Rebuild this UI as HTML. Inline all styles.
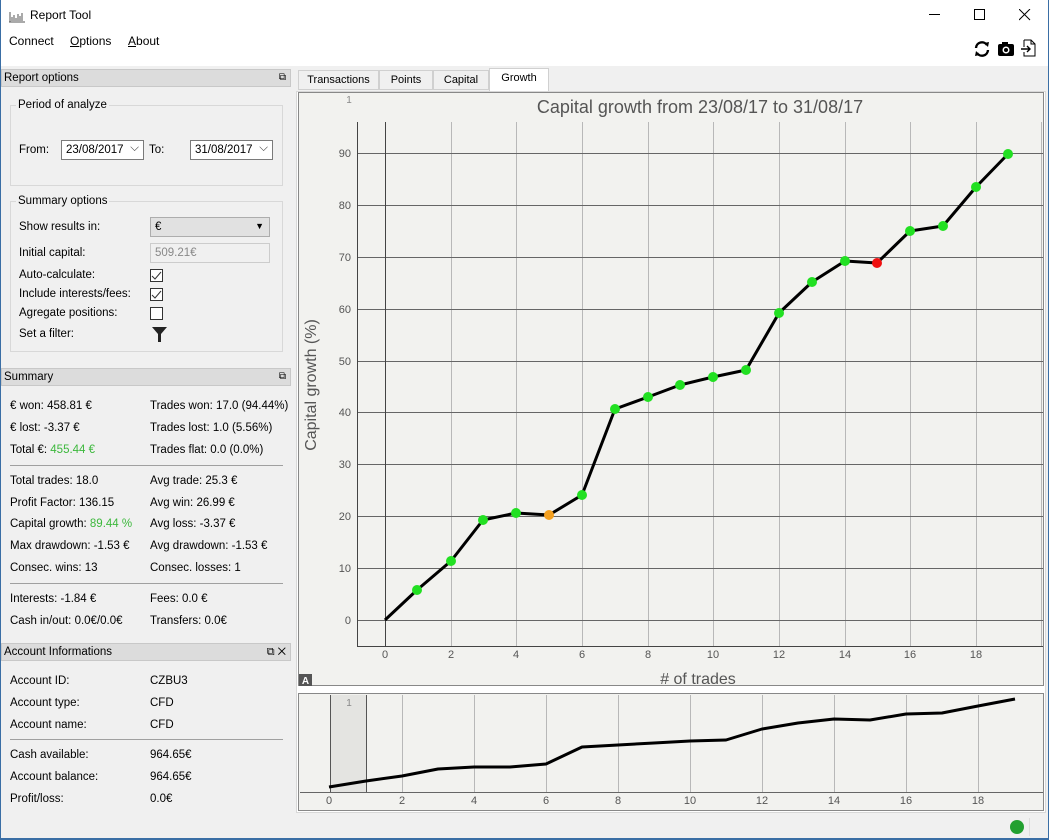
<!DOCTYPE html>
<html><head><meta charset="utf-8"><style>
*{margin:0;padding:0;box-sizing:border-box}
body{width:1049px;height:840px;background:#f0f0f0;font-family:"Liberation Sans",sans-serif;font-size:11.5px;color:#000;position:relative;overflow:hidden}
.a{position:absolute;white-space:nowrap}
.hdr{position:absolute;left:1px;width:290px;height:18px;background:#dcdcdc;border:1px solid #c8c8c8;padding:2px 2px;font-size:11.5px}
.grp{position:absolute;border:1px solid #d8d8d8}
.cb{position:absolute;width:13px;height:13px;border:1px solid #333;background:#fff}
.hr{position:absolute;left:10px;width:273px;height:1px;background:#a0a0a0}
.g{color:#3cb83c}
</style></head><body>
<div class="a" style="left:0;top:0;width:1049px;height:66px;background:#fff"></div>
<div class="a" style="left:0;top:0;width:1px;height:840px;background:#3a6ea5"></div>
<div class="a" style="right:0;top:0;width:1px;height:840px;background:#3a6ea5"></div>
<svg class="a" style="left:8px;top:8px" width="18" height="16"><path d="M1 14H17M2 14V4M4 13V9M6 13V7M8 13V10M10 13V6M12 13V8M14 13V5" stroke="#555" stroke-width="1" fill="none"/></svg>
<div class="a" style="left:30px;top:8px;font-size:12px">Report Tool</div>
<div class="a" style="left:929px;top:14px;width:11px;height:1px;background:#000"></div>
<div class="a" style="left:974px;top:9px;width:11px;height:11px;border:1px solid #000"></div>
<svg class="a" style="left:1019px;top:9px" width="12" height="12"><path d="M0 0L11 11M11 0L0 11" stroke="#000"/></svg>
<div class="a" style="left:9px;top:34px;font-size:12px">Connect</div>
<div class="a" style="left:70px;top:34px;font-size:12px"><u>O</u>ptions</div>
<div class="a" style="left:128px;top:34px;font-size:12px"><u>A</u>bout</div>
<svg class="a" style="left:973px;top:40px" width="18" height="18"><path d="M3 8A6 6 0 0 1 14 5M15 10A6 6 0 0 1 4 13" stroke="#000" stroke-width="2.4" fill="none"/><path d="M11 3L16 2L15 7Z M7 15L2 16L3 11Z" fill="#000"/></svg>
<svg class="a" style="left:997px;top:41px" width="18" height="16"><rect x="1" y="3" width="16" height="12" rx="2" fill="#000"/><rect x="5" y="1" width="6" height="3" fill="#000"/><circle cx="9" cy="9" r="3.5" fill="#fff"/><circle cx="9" cy="9" r="2" fill="#000"/></svg>
<svg class="a" style="left:1021px;top:39px" width="16" height="19"><path d="M3 1H10L14 5V17H3V13M3 8V1M10 1V5H14" stroke="#000" fill="none"/><path d="M0 10H9M6 7L9 10L6 13" stroke="#000" stroke-width="1.4" fill="none"/></svg>

<div class="hdr" style="top:69px">Report options<span style="position:absolute;right:4px;font-size:10px">⧉</span></div>
<div class="grp" style="left:10px;top:105px;width:273px;height:81px"></div>
<div class="a" style="left:16px;top:99px;background:#f0f0f0;padding:0 2px">Period of analyze</div>
<div class="a" style="left:19px;top:144px">From:</div>
<div class="a" style="left:61px;top:140px;width:83px;height:20px;border:1px solid #7a7a7a;background:#fff;padding:3px 4px">23/08/2017 <span style="position:absolute;right:4px;top:1px;color:#444">⌵</span></div>
<div class="a" style="left:149px;top:144px">To:</div>
<div class="a" style="left:190px;top:140px;width:83px;height:20px;border:1px solid #7a7a7a;background:#fff;padding:3px 4px">31/08/2017 <span style="position:absolute;right:4px;top:1px;color:#444">⌵</span></div>
<div class="grp" style="left:10px;top:201px;width:273px;height:151px"></div>
<div class="a" style="left:16px;top:195px;background:#f0f0f0;padding:0 2px">Summary options</div>
<div class="a" style="left:19px;top:221px">Show results in:</div>
<div class="a" style="left:150px;top:217px;width:120px;height:20px;border:1px solid #adadad;background:#e1e1e1;padding:3px 4px">€<span style="position:absolute;right:5px;top:3px;font-size:9px">▼</span></div>
<div class="a" style="left:19px;top:247px">Initial capital:</div>
<div class="a" style="left:150px;top:243px;width:120px;height:20px;border:1px solid #ccc;background:#f0f0f0;padding:3px 4px;color:#888">509.21€</div>
<div class="a" style="left:19px;top:269px">Auto-calculate:</div>
<div class="cb" style="left:150px;top:269px"><svg width="11" height="11" style="position:absolute;left:0;top:0"><path d="M1 6L4 9L10 2" stroke="#333" fill="none"/></svg></div>
<div class="a" style="left:19px;top:288px">Include interests/fees:</div>
<div class="cb" style="left:150px;top:288px"><svg width="11" height="11" style="position:absolute;left:0;top:0"><path d="M1 6L4 9L10 2" stroke="#333" fill="none"/></svg></div>
<div class="a" style="left:19px;top:307px">Agregate positions:</div>
<div class="cb" style="left:150px;top:307px"></div>
<div class="a" style="left:19px;top:328px">Set a filter:</div>
<svg class="a" style="left:152px;top:326px" width="15" height="17"><path d="M0 1H15L9 8V16H6V8Z" fill="#222"/></svg>

<div class="hdr" style="top:368px">Summary<span style="position:absolute;right:4px;font-size:10px">⧉</span></div>
<div class="a" style="left:10px;top:400px">€ won: 458.81 €</div><div class="a" style="left:150px;top:400px">Trades won: 17.0 (94.44%)</div>
<div class="a" style="left:10px;top:422px">€ lost: -3.37 €</div><div class="a" style="left:150px;top:422px">Trades lost: 1.0 (5.56%)</div>
<div class="a" style="left:10px;top:444px">Total €: <span class="g">455.44 €</span></div><div class="a" style="left:150px;top:444px">Trades flat: 0.0 (0.0%)</div>
<div class="hr" style="top:465px"></div>
<div class="a" style="left:10px;top:475px">Total trades: 18.0</div><div class="a" style="left:150px;top:475px">Avg trade: 25.3 €</div>
<div class="a" style="left:10px;top:497px">Profit Factor: 136.15</div><div class="a" style="left:150px;top:497px">Avg win: 26.99 €</div>
<div class="a" style="left:10px;top:518px">Capital growth: <span class="g">89.44 %</span></div><div class="a" style="left:150px;top:518px">Avg loss: -3.37 €</div>
<div class="a" style="left:10px;top:540px">Max drawdown: -1.53 €</div><div class="a" style="left:150px;top:540px">Avg drawdown: -1.53 €</div>
<div class="a" style="left:10px;top:562px">Consec. wins: 13</div><div class="a" style="left:150px;top:562px">Consec. losses: 1</div>
<div class="hr" style="top:583px"></div>
<div class="a" style="left:10px;top:593px">Interests: -1.84 €</div><div class="a" style="left:150px;top:593px">Fees: 0.0 €</div>
<div class="a" style="left:10px;top:615px">Cash in/out: 0.0€/0.0€</div><div class="a" style="left:150px;top:615px">Transfers: 0.0€</div>

<div class="hdr" style="top:643px">Account Informations<span style="position:absolute;right:4px;font-size:11px">⧉ ✕</span></div>
<div class="a" style="left:10px;top:675px">Account ID:</div><div class="a" style="left:150px;top:675px">CZBU3</div>
<div class="a" style="left:10px;top:697px">Account type:</div><div class="a" style="left:150px;top:697px">CFD</div>
<div class="a" style="left:10px;top:719px">Account name:</div><div class="a" style="left:150px;top:719px">CFD</div>
<div class="hr" style="top:739px"></div>
<div class="a" style="left:10px;top:749px">Cash available:</div><div class="a" style="left:150px;top:749px">964.65€</div>
<div class="a" style="left:10px;top:771px">Account balance:</div><div class="a" style="left:150px;top:771px">964.65€</div>
<div class="a" style="left:10px;top:793px">Profit/loss:</div><div class="a" style="left:150px;top:793px">0.0€</div>

<div class="a" style="left:298px;top:70px;width:81px;height:20px;border:1px solid #d0d0d0;background:#f0f0f0;padding:3px 0;text-align:center;font-size:11px">Transactions</div>
<div class="a" style="left:379px;top:70px;width:54px;height:20px;border:1px solid #d0d0d0;background:#f0f0f0;padding:3px 0;text-align:center;font-size:11px">Points</div>
<div class="a" style="left:433px;top:70px;width:56px;height:20px;border:1px solid #d0d0d0;background:#f0f0f0;padding:3px 0;text-align:center;font-size:11px">Capital</div>
<div class="a" style="left:489px;top:68px;width:60px;height:24px;border:1px solid #d0d0d0;border-bottom:none;background:#fff;padding:3px 0;text-align:center;font-size:11px">Growth</div>

<svg class="a" style="left:0;top:0" width="1049" height="840" font-family="Liberation Sans, sans-serif">
<rect x="296.5" y="91.5" width="749" height="721" fill="#fff" stroke="#d8d8d8"/>
<rect x="298.5" y="92.5" width="745" height="593" fill="#f2f2ef" stroke="#888"/>
<rect x="298.5" y="693.5" width="745" height="117" fill="#f2f2ef" stroke="#888"/>
<text x="700" y="113" font-size="18" fill="#555" text-anchor="middle">Capital growth from 23/08/17 to 31/08/17</text>
<text x="349" y="103" font-size="10" fill="#888" text-anchor="middle">1</text>
<g stroke="#b8b8b8" stroke-width="1" fill="none">
<path d="M451.5 122V646M516.5 122V646M582.5 122V646M648.5 122V646M713.5 122V646M779.5 122V646M845.5 122V646M910.5 122V646M976.5 122V646M1041.5 122V646"/>
</g>
<g stroke="#666" stroke-width="1" fill="none">
<path d="M357 568.5H1043M357 516.5H1043M357 464.5H1043M357 412.5H1043M357 361.5H1043M357 309.5H1043M357 257.5H1043M357 205.5H1043M357 153.5H1043M357 620.5H1043"/>
<path d="M357.5 122V646.5H1043M385.5 122V646" stroke="#444"/>
</g>
<g font-size="11" fill="#555" text-anchor="end">
<text x="351" y="624">0</text><text x="351" y="572">10</text><text x="351" y="520">20</text><text x="351" y="468">30</text><text x="351" y="416">40</text><text x="351" y="365">50</text><text x="351" y="313">60</text><text x="351" y="261">70</text><text x="351" y="209">80</text><text x="351" y="157">90</text>
</g>
<g font-size="11" fill="#555" text-anchor="middle">
<text x="385" y="658">0</text><text x="451" y="658">2</text><text x="516" y="658">4</text><text x="582" y="658">6</text><text x="648" y="658">8</text><text x="713" y="658">10</text><text x="779" y="658">12</text><text x="845" y="658">14</text><text x="910" y="658">16</text><text x="976" y="658">18</text>
</g>
<text x="698" y="684" font-size="16" fill="#555" text-anchor="middle"># of trades</text>
<text transform="translate(316 385) rotate(-90)" font-size="16" fill="#555" text-anchor="middle">Capital growth (%)</text>
<rect x="299" y="674" width="13" height="12" fill="#555"/><text x="305.5" y="684" font-size="10" font-weight="bold" fill="#fff" text-anchor="middle">A</text>
<polyline fill="none" stroke="#000" stroke-width="3" stroke-linejoin="round" points="385,620 417,590 451,561 483,520 516,513 549,515 582,495 615,409 648,397 680,385 713,377 746,370 779,313 812,282 845,261 877,263 910,231 943,226 976,187 1008,154"/>
<g fill="#22e022">
<circle cx="417" cy="590" r="5"/><circle cx="451" cy="561" r="5"/><circle cx="483" cy="520" r="5"/><circle cx="516" cy="513" r="5"/><circle cx="582" cy="495" r="5"/><circle cx="615" cy="409" r="5"/><circle cx="648" cy="397" r="5"/><circle cx="680" cy="385" r="5"/><circle cx="713" cy="377" r="5"/><circle cx="746" cy="370" r="5"/><circle cx="779" cy="313" r="5"/><circle cx="812" cy="282" r="5"/><circle cx="845" cy="261" r="5"/><circle cx="910" cy="231" r="5"/><circle cx="943" cy="226" r="5"/><circle cx="976" cy="187" r="5"/><circle cx="1008" cy="154" r="5"/>
</g>
<circle cx="549" cy="515" r="5" fill="#f4a020"/><circle cx="877" cy="263" r="5" fill="#f01010"/>

<rect x="330" y="695" width="36" height="97" fill="#e4e4e1"/>
<path d="M330.5 695V792M366.5 695V792" stroke="#555" fill="none"/>
<g stroke="#b8b8b8" fill="none"><path d="M402.5 695V792M474.5 695V792M546.5 695V792M618.5 695V792M690.5 695V792M762.5 695V792M834.5 695V792M906.5 695V792M978.5 695V792"/></g>
<path d="M300 792.5H1043" stroke="#666" fill="none"/>
<text x="349" y="706" font-size="10" fill="#888" text-anchor="middle">1</text>
<polyline fill="none" stroke="#000" stroke-width="3" stroke-linejoin="round" points="329,787 366,781 402,776 438,769 474,767 510,767 546,764 582,747 618,745 654,743 690,741 726,740 762,729 798,723 834,719 870,720 906,714 942,713 978,706 1015,699"/>
<g font-size="11" fill="#555" text-anchor="middle">
<text x="329" y="804">0</text><text x="402" y="804">2</text><text x="474" y="804">4</text><text x="546" y="804">6</text><text x="618" y="804">8</text><text x="690" y="804">10</text><text x="762" y="804">12</text><text x="834" y="804">14</text><text x="906" y="804">16</text><text x="978" y="804">18</text>
</g>
<circle cx="1017" cy="827" r="7" fill="#22a030"/>
<path d="M1029.5 818V836" stroke="#ddd"/>
<rect x="0" y="838" width="1049" height="2" fill="#3a6ea5"/>
</svg>
</body></html>
